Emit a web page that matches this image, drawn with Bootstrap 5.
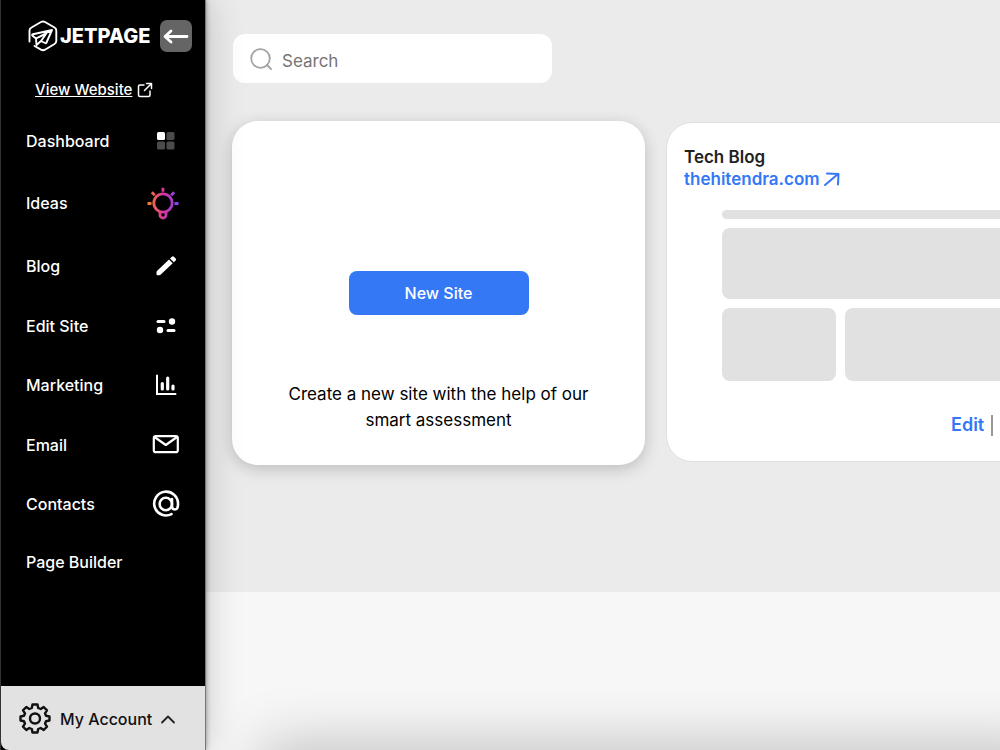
<!DOCTYPE html>
<html lang="en">
<head>
<meta charset="utf-8">
<meta name="viewport" content="width=device-width, initial-scale=1">
<title>Jetpage</title>
<link href="https://cdn.jsdelivr.net/npm/bootstrap@5.3.0/dist/css/bootstrap.min.css" rel="stylesheet">
<style>
  body { font-family: Inter, "Liberation Sans", sans-serif; background: #f7f7f7; color: #111; }
  svg { display: block; flex: none; overflow: visible; }
  .sidebar { width: 206px; flex: none; background: #000; border-left: 1px solid #333; border-right: 1px solid #777; box-shadow: 0 0 5px rgba(0,0,0,.4), 0 0 36px rgba(0,0,0,.2); z-index: 2; }
  .brand { padding: 20px 13px 0 26px; height: 52px; }
  .brand-name { font-size: 20px; font-weight: 800; line-height: 30px; margin-left: 1px; }
  .collapse-btn { width: 32px; height: 32px; border-radius: 7px; background: #656565; }
  .site-link { margin: 25px 0 0 34px; font-size: 15px; font-weight: 500; line-height: 26px; gap: 5px; }
  .side-nav { margin-top: 9px; padding: 0 26px 0 25px; }
  .side-nav a { font-size: 16px; font-weight: 500; line-height: 20px; padding: 18px 0; }
  .account { height: 64px; background: #e2e2e2; color: #111; padding: 2px 18px 0; gap: 9px; font-size: 16px; font-weight: 500; border-bottom-left-radius: 8px; }
  .workspace { background: #ebebeb; height: 592px; padding: 34px 0 0 26px; }
  .search-box { width: 319px; height: 49px; border-radius: 12px; margin-left: 1px; padding: 0 17px; gap: 9px; }
  .search-box input { font-size: 17px; color: #333; line-height: 24px; }
  .search-box input::placeholder { color: #757575; opacity: 1; }
  .tiles { margin-top: 38px; gap: 21px; }
  .tile { flex: 0 0 413px; background: #fff; border-radius: 26px; }
  .tile-new { height: 344px; padding: 150px 50px 30px; box-shadow: 0 4px 16px rgba(0,0,0,.2); }
  .new-btn { width: 180px; height: 44px; border-radius: 8px; background: #3478f6; font-size: 16px; font-weight: 500; }
  .tile-new p { font-size: 17px; line-height: 26px; margin-top: 66px; color: #000; }
  .tile-site { height: 340px; margin-top: 1px; border: 1px solid #e0e0e0; padding: 23px 17px 22px; }
  .tile-site h2 { font-size: 17px; font-weight: 600; line-height: 22px; color: #222; }
  .blue-link { color: #3478f6; font-size: 17px; font-weight: 600; line-height: 22px; }
  .preview { padding: 20px 37px 0 38px; display: grid; gap: 9px; grid-template-columns: 114px 1fr; grid-template-rows: 9px 71px 73px; }
  .preview div { background: #e1e1e1; border-radius: 8px; }
  .preview .wide { grid-column: 1 / -1; }
  .preview .bar { border-radius: 5px; }
  .tile-actions { margin-top: 33px; padding-left: 267px; gap: 7px; }
  .tile-actions .blue-link { font-size: 18px; }
  .divider { width: 2px; height: 21px; background: #999; }
  .bottom-shade { height: 60px; left: 270px; right: -40px; bottom: -64px; box-shadow: 0 0 60px 8px rgba(0,0,0,.24); }
</style>
</head>
<body>
<div class="d-flex min-vh-100 overflow-hidden position-relative">
  <aside class="sidebar d-flex flex-column text-white">
    <div class="brand d-flex justify-content-between align-items-start">
      <div class="d-flex align-items-center">
        <svg width="32" height="32" viewBox="0 0 32 32" fill="none" stroke="#fff" stroke-width="1.9" stroke-linejoin="round" stroke-linecap="round"><path d="M2.500 21.500V10.500q0-2 2-3L14 2q2-1 4 0l9.500 5.500q1.800 1 1.800 3V21q0 2-1.800 3L18 29.700q-2 1-4 0L7.500 26"/><path d="M25 10 6 14.200q-1.500.5-.5 1.500L9 18.500zM25 10l-5.500 12.500q-.5 1-1.500.5l-4-2-4.500 4L9 18.500 19 14M14 21l5-7"/></svg>
        <span class="brand-name">JETPAGE</span>
      </div>
      <button type="button" class="collapse-btn btn border-0 p-0 d-flex align-items-center justify-content-center" aria-label="Collapse menu">
        <svg width="26" height="16" viewBox="0 0 26 16" fill="none" stroke="#fff" stroke-width="2.800" stroke-linecap="round" stroke-linejoin="round"><path d="M24 8.500H2.500M8 3 2 8.500l6 5.500"/></svg>
      </button>
    </div>
    <div class="site-link d-flex align-items-center">
      <a href="#" class="text-white">View Website</a>
      <svg width="16" height="16" viewBox="0 0 16 16" fill="none" stroke="#fff" stroke-width="1.500" stroke-linecap="round" stroke-linejoin="round"><path d="M7 3H3Q1.500 3 1.500 4.500v8.500Q1.500 14.500 3 14.500h8.500q1.500 0 1.500-1.500V9M9.500 1.500h5v5M14.500 1.500 7.500 8.500"/></svg>
    </div>
    <nav class="side-nav d-flex flex-column">
      <a href="#" class="d-flex justify-content-between align-items-center text-white text-decoration-none">Dashboard
        <svg width="26" height="22" viewBox="0 0 26 22"><rect x="4" y="2" width="8" height="8" rx="1.500" fill="#fff"/><g fill="#4b4b4b"><rect x="13.500" y="2" width="8" height="8" rx="1.500"/><rect x="4" y="11.500" width="8" height="8" rx="1.500"/><rect x="13.500" y="11.500" width="8" height="8" rx="1.500"/></g></svg></a>
      <a href="#" class="d-flex justify-content-between align-items-center text-white text-decoration-none">Ideas
        <svg width="32" height="30" viewBox="0 0 32 30" fill="none" stroke="url(#bulb)" stroke-width="2.800"><defs><linearGradient id="bulb" gradientUnits="userSpaceOnUse" x1="0" y1="12" x2="32" y2="12"><stop offset="0" stop-color="#f58220"/><stop offset=".5" stop-color="#d9379b"/><stop offset="1" stop-color="#7a45f5"/></linearGradient></defs><circle cx="16" cy="15" r="9.200"/><path d="M13 23.500v3.500a3 3 0 0 0 6 0v-3.500" stroke-width="2.800"/><path d="M.5 15.500h4M27.500 15.500h4M15.900-.2l.1 4M4.800 4.300l3 3M27.200 4.300l-3 3"/></svg></a>
      <a href="#" class="d-flex justify-content-between align-items-center text-white text-decoration-none">Blog
        <svg width="26" height="24" viewBox="0 0 26 24" fill="#fff"><path d="M3.500 18.500q0-1 .7-1.700L16 5.500l3.700 3.700L7.800 20.600q-.8.700-1.700.7H4.500q-1 0-1-1zM17 4.500l1.900-1.800q1-.9 2 0l1.800 1.800q.9 1 0 2l-1.900 1.800z"/></svg></a>
      <a href="#" class="d-flex justify-content-between align-items-center text-white text-decoration-none">Edit Site
        <svg width="26" height="23" viewBox="0 0 26 23" fill="#fff"><rect x="3.500" y="6" width="9" height="3" rx="1.500"/><circle cx="19" cy="7.500" r="3.200"/><circle cx="7" cy="16" r="3.200"/><rect x="13.500" y="15" width="9" height="3" rx="1.500"/></svg></a>
      <a href="#" class="d-flex justify-content-between align-items-center text-white text-decoration-none">Marketing
        <svg width="26" height="24" viewBox="0 0 26 24" fill="none" stroke="#fff" stroke-linecap="round"><path stroke-width="2" d="M4 2.500v18.500H22.500"/><path stroke-width="3.200" d="M9.300 10.500v5.500M14.700 5v11M20 13v3"/></svg></a>
      <a href="#" class="d-flex justify-content-between align-items-center text-white text-decoration-none">Email
        <svg width="27" height="23" viewBox="0 0 27 23" fill="none" stroke="#fff" stroke-width="2.200" stroke-linejoin="round"><rect x="1.800" y="3.200" width="24" height="16" rx="2"/><path d="m2.500 4 11.300 8L25 4"/></svg></a>
      <a href="#" class="d-flex justify-content-between align-items-center text-white text-decoration-none">Contacts
        <svg width="26" height="24" viewBox="0 0 26 24" fill="none" stroke="#fff" stroke-width="2.600" stroke-linecap="round"><circle cx="12.800" cy="12" r="6.200"/><path d="M19 7v7q0 3.500 3 3.500t3-5.500A11.900 11.900 0 1 0 18.500 22.200"/></svg></a>
      <a href="#" class="text-white text-decoration-none">Page Builder</a>
    </nav>
    <button type="button" class="account mt-auto border-0 d-flex align-items-center">
      <svg width="32" height="32" viewBox="0 0 32 32" fill="none" stroke="#111" stroke-width="2.400" stroke-linejoin="round"><circle cx="16" cy="15.500" r="5"/><path d="M13.500 1.500h5l.7 3.500 2.500 1 3-2 3.300 3.300-2 3 1 2.500 3.500.7v4l-3.500.7-1 2.500 2 3-3.300 3.300-3-2-2.500 1-.7 3.500h-5l-.7-3.500-2.500-1-3 2L4 23.700l2-3-1-2.500L1.500 17.500v-4l3.500-.7 1-2.500-2-3 3.300-3.300 3 2 2.500-1z"/></svg>
      My Account
      <svg width="14" height="9" viewBox="0 0 14 9" fill="none" stroke="#222" stroke-width="1.800" stroke-linecap="round" stroke-linejoin="round"><path d="m1 7.500 6-6 6 6"/></svg>
    </button>
  </aside>
  <main class="flex-grow-1 overflow-hidden">
    <div class="workspace">
      <div class="search-box bg-white d-flex align-items-center">
        <svg width="23" height="23" viewBox="0 0 23 23" fill="none" stroke="#a3a3a3" stroke-width="1.800" stroke-linecap="round"><circle cx="10.500" cy="11.500" r="9.300"/><path d="m17 18 4 4"/></svg>
        <input type="search" class="border-0 p-0 pt-1 w-100 bg-transparent" placeholder="Search" aria-label="Search">
      </div>
      <div class="tiles d-flex align-items-start">
        <section class="tile tile-new d-flex flex-column align-items-center text-center">
          <button type="button" class="new-btn btn text-white border-0 p-0 flex-shrink-0">New Site</button>
          <p class="mb-0">Create a new site with the help of our smart assessment</p>
        </section>
        <section class="tile tile-site">
          <h2 class="m-0">Tech Blog</h2>
          <a href="#" class="blue-link d-flex align-items-center gap-1 text-decoration-none">thehitendra.com
            <svg width="16" height="16" viewBox="0 0 16 16" fill="none" stroke="#3478f6" stroke-width="2" stroke-linecap="round" stroke-linejoin="round"><path d="M1 14 14 3M3 2.500l11.500.5-.5 10.500"/></svg></a>
          <div class="preview"><div class="wide bar"></div><div class="wide"></div><div></div><div></div></div>
          <div class="tile-actions d-flex align-items-center">
            <a href="#" class="blue-link text-decoration-none">Edit</a><span class="divider"></span>
          </div>
        </section>
      </div>
    </div>
  </main>
  <div class="bottom-shade position-absolute"></div>
</div>
<script src="https://cdn.jsdelivr.net/npm/bootstrap@5.3.0/dist/js/bootstrap.bundle.min.js"></script>
</body>
</html>
